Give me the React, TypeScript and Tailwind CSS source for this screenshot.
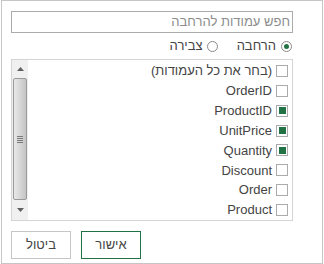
import { useState } from "react";

const columns = [
  { name: "(בחר את כל העמודות)", checked: false },
  { name: "OrderID", checked: false },
  { name: "ProductID", checked: true },
  { name: "UnitPrice", checked: true },
  { name: "Quantity", checked: true },
  { name: "Discount", checked: false },
  { name: "Order", checked: false },
  { name: "Product", checked: false },
];

function Radio({ checked }: { checked: boolean }) {
  return (
    <span className="flex size-[11px] items-center justify-center rounded-full border border-[#8a8a8a] bg-white">
      {checked && <span className="size-[5px] rounded-full bg-[#217346]" />}
    </span>
  );
}

function Check({ checked }: { checked: boolean }) {
  return (
    <span className="flex size-[12px] shrink-0 items-center justify-center border border-[#ababab] bg-white">
      {checked && <span className="size-[7px] bg-[#217346]" />}
    </span>
  );
}

function ScrollBar() {
  return (
    <div className="flex w-[16px] shrink-0 flex-col bg-[#f0f0f0]">
      <div className="flex h-[18px] items-center justify-center">
        <svg width="7" height="4" viewBox="0 0 7 4">
          <path d="M0 4 L3.5 0 L7 4 Z" fill="#606060" />
        </svg>
      </div>
      <div className="mx-[1px] flex h-[122px] items-center justify-center rounded-[2px] border border-[#9a9a9a] bg-gradient-to-r from-[#e8e8e8] via-[#d6d6d6] to-[#c4c4c4]">
        <div className="flex flex-col gap-[1px]">
          <span className="h-[1px] w-[6px] bg-[#7a7a7a]" />
          <span className="h-[1px] w-[6px] bg-[#7a7a7a]" />
          <span className="h-[1px] w-[6px] bg-[#7a7a7a]" />
          <span className="h-[1px] w-[6px] bg-[#7a7a7a]" />
        </div>
      </div>
      <div className="flex flex-1 items-center justify-center">
        <svg width="7" height="4" viewBox="0 0 7 4">
          <path d="M0 0 L3.5 4 L7 0 Z" fill="#606060" />
        </svg>
      </div>
    </div>
  );
}

export default function App() {
  const [mode] = useState("expand");

  return (
    <div
      dir="rtl"
      className="ml-[1px] flex h-[264px] w-[322px] flex-col border border-[#c6c6c6] bg-white pl-[9px] pr-[29px] pt-[10px] text-[13px] text-[#444444]"
      style={{ fontFamily: '"Liberation Sans", "DejaVu Sans", sans-serif' }}
    >
      <div className="flex h-[22px] w-[282px] items-center border border-[#ababab] pr-[2px] text-[#8c8c8c]">
        חפש עמודות להרחבה
      </div>

      <div className="mt-[7px] flex h-[12px] items-center pr-[1px]">
        <Radio checked={mode === "expand"} />
        <span className="mr-[5px]">הרחבה</span>
        <span className="mr-[19px]">
          <Radio checked={mode !== "expand"} />
        </span>
        <span className="mr-[4px]">צבירה</span>
      </div>

      <div className="mt-[7px] flex h-[162px] w-[282px] border border-[#d4d4d4]">
        <div className="flex flex-1 flex-col pr-[4px] pt-[1px]">
          {columns.map((c) => (
            <div key={c.name} className="flex h-[20px] items-center gap-[4px]">
              <Check checked={c.checked} />
              <span>{c.name}</span>
            </div>
          ))}
        </div>
        <ScrollBar />
      </div>

      <div className="mt-[10px] flex justify-end gap-[10px]">
        <button className="h-[28px] w-[60px] border border-[#217346] bg-white text-[#444444]">
          אישור
        </button>
        <button className="h-[28px] w-[60px] border border-[#c6c6c6] bg-white text-[#444444]">
          ביטול
        </button>
      </div>
    </div>
  );
}
